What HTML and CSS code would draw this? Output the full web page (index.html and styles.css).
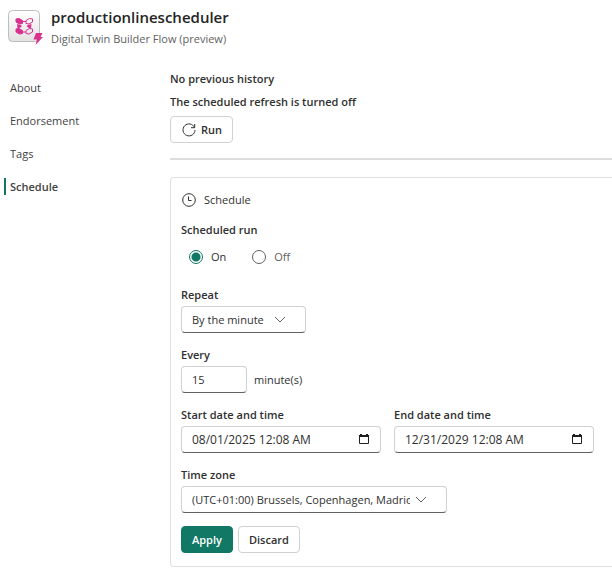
FILE: index.html
```html
<!DOCTYPE html>
<html lang="en">
<head>
<meta charset="utf-8">
<title>productionlinescheduler</title>
<link rel="stylesheet" href="styles.css">
</head>
<body>
<header class="header">
  <svg class="logo" viewBox="0 0 36 36" aria-hidden="true">
    <defs><linearGradient id="tile" x1="0" y1="0" x2="0" y2="1"><stop offset="0" stop-color="#fff"/><stop offset="1" stop-color="#e2e2e2"/></linearGradient></defs>
    <rect x=".5" y=".5" width="31" height="31" rx="4" fill="url(#tile)" stroke="#bdbdbd"/>
    <g fill="#d6318f" stroke="#d6318f" stroke-width="1" stroke-linejoin="round">
      <path d="M8 9l3-.5 3.500 2v3l-3 .5L8 12z"/>
      <path d="M8 19l3-.5 3.500 2v3l-3 .5L8 22z"/>
      <path fill="none" d="M18 10.500l3.500-2 3 .5v3L21 14l-3-.5zM18 20.500l3.500-2 3 .5v3L21 24l-3-.5z"/>
      <path fill="none" d="M14.500 11.500H18M14.500 22H18"/>
      <path stroke="none" d="M9 14l3.500 1 1.500 1-1.500 1.500L9.500 18.500zM23.500 14L20 15l-1.500 1 1.500 1.500 3 1z"/>
    </g>
    <path d="M28 23h6.500l-2 4H35l-7.500 8 1.500-5.500h-3.500z" fill="#d6318f"/>
  </svg>
  <div>
    <h1 class="title">productionlinescheduler</h1>
    <p class="subtitle">Digital Twin Builder Flow (preview)</p>
  </div>
</header>
<div class="body">
  <nav class="nav">
    <a href="#about">About</a>
    <a href="#endorsement">Endorsement</a>
    <a href="#tags">Tags</a>
    <a href="#schedule" class="active" aria-current="page">Schedule</a>
  </nav>
  <main class="main">
    <p class="status">No previous history</p>
    <p class="status">The scheduled refresh is turned off</p>
    <button class="button run" type="button">
      <svg class="icon" viewBox="0 0 14 14" aria-hidden="true"><path d="M12.500 4.500A6 6 0 1 0 13 7M12.700 1v3.700H9"/></svg>
      Run
    </button>
    <hr class="rule">
    <form class="card" id="schedule">
      <h2 class="card-title">
        <svg class="icon" viewBox="0 0 14 14" aria-hidden="true"><circle cx="7" cy="7" r="6.300"/><path d="M6.500 3.500v4H9.500"/></svg>
        Schedule
      </h2>
      <fieldset class="radios">
        <legend>Scheduled run</legend>
        <div class="radio-row">
          <label><input type="radio" name="run" checked>On</label>
          <label class="muted"><input type="radio" name="run">Off</label>
        </div>
      </fieldset>
      <div class="field">
        <label for="repeat">Repeat</label>
        <div class="select repeat">
          <select id="repeat"><option>By the minute</option><option>Hourly</option><option>Daily</option></select>
          <svg class="chevron" viewBox="0 0 12 8" aria-hidden="true"><path d="M1 1l5 5 5-5"/></svg>
        </div>
      </div>
      <div class="field">
        <label for="every">Every</label>
        <div class="inline"><input class="box every" id="every" type="text" inputmode="numeric" value="15"><span>minute(s)</span></div>
      </div>
      <div class="dates">
        <div class="field">
          <label for="start">Start date and time</label>
          <div class="date">
            <input class="box" id="start" type="text" value="08/01/2025 12:08 AM">
            <button class="picker" type="button" aria-label="Pick start date"><svg viewBox="0 0 12 12" aria-hidden="true"><path d="M1.500 2.500h9v8h-9z" fill="none" stroke="#202020"/><path d="M1 2h10v2H1zM2 1h2v1H2zM8 1h2v1H8z" fill="#202020"/></svg></button>
          </div>
        </div>
        <div class="field">
          <label for="end">End date and time</label>
          <div class="date">
            <input class="box" id="end" type="text" value="12/31/2029 12:08 AM">
            <button class="picker" type="button" aria-label="Pick end date"><svg viewBox="0 0 12 12" aria-hidden="true"><path d="M1.500 2.500h9v8h-9z" fill="none" stroke="#202020"/><path d="M1 2h10v2H1zM2 1h2v1H2zM8 1h2v1H8z" fill="#202020"/></svg></button>
          </div>
        </div>
      </div>
      <div class="field">
        <label for="zone">Time zone</label>
        <div class="select zone">
          <select id="zone"><option>(UTC+01:00) Brussels, Copenhagen, Madrid, Paris</option></select>
          <svg class="chevron" viewBox="0 0 12 8" aria-hidden="true"><path d="M1 1l5 5 5-5"/></svg>
        </div>
      </div>
      <div class="actions">
        <button class="button primary" type="submit">Apply</button>
        <button class="button" type="button">Discard</button>
      </div>
    </form>
  </main>
</div>
</body>
</html>
```
FILE: styles.css
```css
* { box-sizing: border-box; }
body { margin: 0; background: #fff; color: #303030; font: 11px/16px "Open Sans", "Noto Sans", sans-serif; }
h1, h2, p { margin: 0; }
input, select, button { font: inherit; color: inherit; }

.header { display: flex; gap: 7px; padding: 7px 8px 0; }
.logo { width: 36px; height: 36px; margin-top: 3px; }
.title { font-size: 15px; line-height: 20px; font-weight: 600; color: #242424; }
.subtitle { margin-top: 4px; color: #616161; }

.body { display: grid; grid-template-columns: 166px minmax(0, 1fr); padding: 24px 0 4px 4px; }
.nav { display: flex; flex-direction: column; gap: 16px; padding-top: 8px; }
.nav a { padding-left: 4px; border-left: 2px solid transparent; line-height: 17px; color: #424242; text-decoration: none; }
.nav .active { border-color: #117865; font-weight: 600; }

.main { overflow: hidden; }
.status { margin-bottom: 7px; font-weight: 600; }
.button { height: 27px; padding: 0 10px; border: 1px solid #d1d1d1; border-radius: 4px; background: #fff; font-weight: 600; }
.run { display: flex; align-items: center; gap: 5px; margin-top: -1px; padding-left: 11px; }
.icon { width: 14px; height: 14px; fill: none; stroke: #303030; stroke-width: 1; }
.rule { height: 2px; margin: 15px 0 17px; border: 0; background: #dcdcdc; }

.card { display: flex; flex-direction: column; gap: 14px; padding: 14px 10px 13px; border: 1px solid #e0e0e0; border-right: 0; border-radius: 4px 0 0 4px; }
.card-title { display: flex; align-items: center; gap: 8px; padding-left: 1px; font-size: 11px; font-weight: 400; }
.radios { margin: 0; padding: 0 0 5px; border: 0; }
.radios legend { padding: 0; font-weight: 600; }
.radio-row { display: flex; gap: 26px; padding: 11px 0 3px 8px; }
.radio-row label { display: flex; align-items: center; gap: 8px; }
.radio-row .muted { color: #616161; }
.radio-row input { appearance: none; width: 14px; height: 14px; margin: 0; border: 1px solid #616161; border-radius: 50%; }
.radio-row input:checked { border-color: #117865; background: radial-gradient(circle, #117865 4px, #fff 5px); }

.field { display: flex; flex-direction: column; align-items: flex-start; gap: 3px; }
.field label { font-weight: 600; }
.box, .select select { height: 27px; border: 1px solid #d1d1d1; border-bottom-color: #616161; border-radius: 4px; background: #fff; padding: 0 10px; }
.select { position: relative; max-width: 100%; }
.select select { appearance: none; width: 100%; padding-right: 36px; }
.repeat { width: 125px; }
.zone { width: 266px; }
.chevron { position: absolute; right: 20px; top: 10px; width: 12px; height: 8px; fill: none; stroke: #616161; pointer-events: none; }
.inline { display: flex; align-items: center; gap: 7px; }
.every { width: 66px; }
.dates { display: flex; gap: 13px; }
.date { position: relative; width: 200px; }
.date .box { width: 100%; padding-right: 28px; font-size: 12px; }
.picker { position: absolute; top: 7px; right: 11px; width: 12px; height: 12px; padding: 0; border: 0; background: none; }
.picker svg { display: block; width: 12px; height: 12px; }
.actions { display: flex; gap: 5px; margin-top: -1px; }
.primary { border-color: #117865; background: #117865; color: #fff; }
```
